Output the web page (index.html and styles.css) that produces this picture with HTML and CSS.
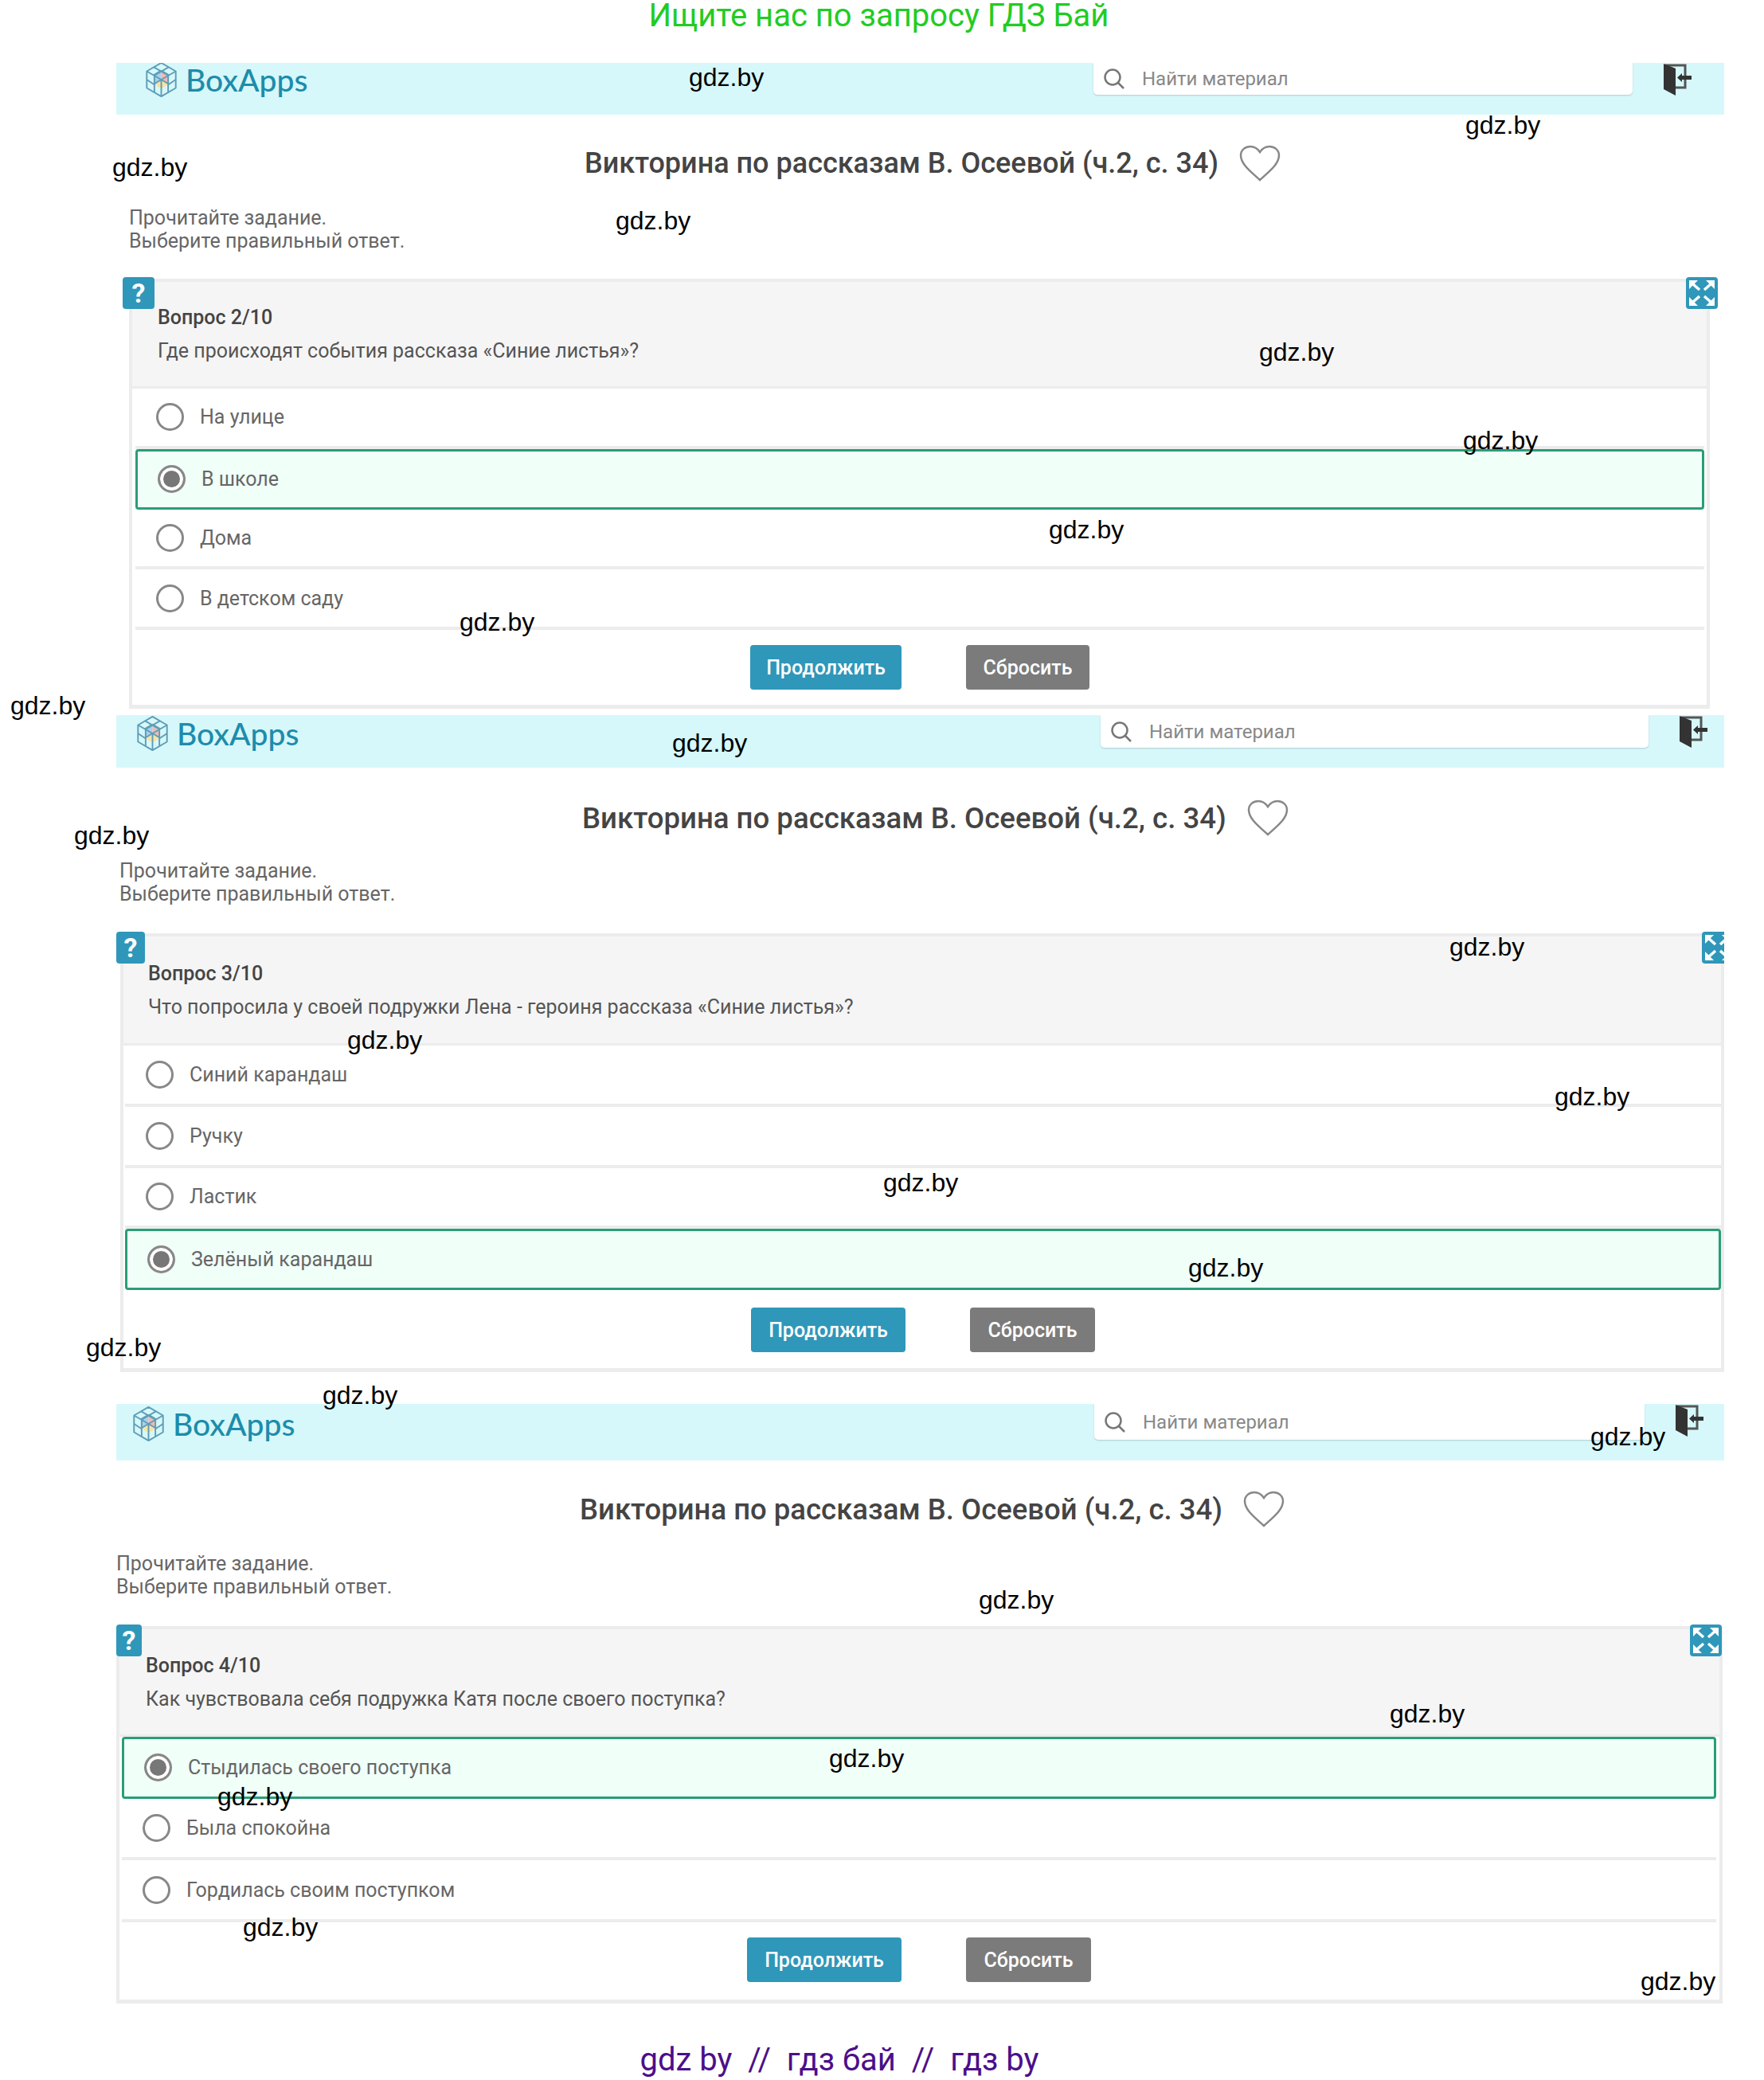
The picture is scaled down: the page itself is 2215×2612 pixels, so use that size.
FILE: index.html

```html
<!DOCTYPE html>
<html lang="ru">
<head>
  <meta charset="UTF-8">
  <title>Викторина по рассказам В. Осеевой</title>
  <link rel="stylesheet" href="styles.css">
</head>
<body>
  <svg class="sprites" width="0" height="0">
    <symbol id="logo-cube" viewBox="0 0 44 48">
      <polygon points="22,12 22,24 12,30 12,18" fill="#a9d0ee"/>
      <polygon points="22,12 32,18 32,30 22,24" fill="#f3b9b4"/>
      <polygon points="22,24 32,30 22,36 12,30" fill="#f7e3a6"/>
      <g fill="none" stroke="#5e9db5" stroke-width="2" stroke-linejoin="round">
        <polygon points="22,2 41,13 41,35 22,46 3,35 3,13"/>
        <path d="M12 7.5 31 18.5V40.500M32 7.500 13 18.500V40.500M3 24 12 30 22 24 32 30 41 24M22 24V46M22 12 12 18M22 12 32 18M3 13 22 24 41 13"/>
      </g>
    </symbol>
    <symbol id="search" viewBox="0 0 28 26">
      <circle cx="12" cy="11" r="9.500" fill="none" stroke="#777" stroke-width="2.500"/>
      <path d="M19 18 26 25" stroke="#777" stroke-width="2.500" fill="none"/>
    </symbol>
    <symbol id="exit" viewBox="0 0 36 40">
      <path d="M2 2H27V30H15" fill="none" stroke="#555" stroke-width="3"/>
      <polygon points="0,0 15,6 15,40 0,32" fill="#333"/>
      <polygon points="17,17.500 23,12 23,15 35,15 35,20 23,20 23,23" fill="#333"/>
    </symbol>
    <symbol id="heart" viewBox="0 0 52 46">
      <path d="M26 44C14 33 2 24 2 13 2 6 8 2 14 2 19 2 23 4.500 26 9 29 4.500 33 2 38 2 44 2 50 6 50 13 50 24 38 33 26 44Z" fill="none" stroke="#888" stroke-width="2.500"/>
    </symbol>
    <symbol id="expand" viewBox="0 0 40 40">
      <g fill="#fff">
        <polygon points="4,4 15,4 4,15"/>
        <polygon points="36,4 25,4 36,15"/>
        <polygon points="4,36 15,36 4,25"/>
        <polygon points="36,36 25,36 36,25"/>
      </g>
      <path d="M8 8 17 16M32 8 23 16M8 32 17 24M32 32 23 24" stroke="#fff" stroke-width="3.500"/>
    </symbol>
  </svg>

  <div class="page">
    <p class="promo">Ищите нас по запросу ГДЗ Бай</p>

    <!-- Question 2 -->
    <section class="quiz quiz-a">
      <header class="topbar">
        <a class="logo" href="#"><svg class="logo-icon"><use href="#logo-cube"/></svg><span class="logo-text">BoxApps</span></a>
        <div class="search"><svg class="search-icon"><use href="#search"/></svg><span>Найти материал</span></div>
        <svg class="exit"><use href="#exit"/></svg>
      </header>
      <div class="title-row">
        <h1>Викторина по рассказам В. Осеевой (ч.2, с. 34)</h1>
        <svg class="heart"><use href="#heart"/></svg>
      </div>
      <p class="hint">Прочитайте задание.<br>Выберите правильный ответ.</p>
      <div class="card">
        <span class="badge badge-help">?</span>
        <span class="badge badge-expand"><svg class="expand-icon"><use href="#expand"/></svg></span>
        <div class="card-head">
          <div class="counter">Вопрос 2/10</div>
          <div class="question">Где происходят события рассказа «Синие листья»?</div>
        </div>
        <div class="options">
          <label class="option"><span class="radio"></span>На улице</label>
          <label class="option selected"><span class="radio"></span>В школе</label>
          <label class="option"><span class="radio"></span>Дома</label>
          <label class="option"><span class="radio"></span>В детском саду</label>
        </div>
        <div class="actions">
          <button class="btn btn-next">Продолжить</button>
          <button class="btn btn-reset">Сбросить</button>
        </div>
      </div>
    </section>

    <!-- Question 3 -->
    <section class="quiz quiz-b">
      <header class="topbar">
        <a class="logo" href="#"><svg class="logo-icon"><use href="#logo-cube"/></svg><span class="logo-text">BoxApps</span></a>
        <div class="search"><svg class="search-icon"><use href="#search"/></svg><span>Найти материал</span></div>
        <svg class="exit"><use href="#exit"/></svg>
      </header>
      <div class="title-row">
        <h1>Викторина по рассказам В. Осеевой (ч.2, с. 34)</h1>
        <svg class="heart"><use href="#heart"/></svg>
      </div>
      <p class="hint">Прочитайте задание.<br>Выберите правильный ответ.</p>
      <div class="card">
        <span class="badge badge-help">?</span>
        <span class="badge badge-expand"><svg class="expand-icon"><use href="#expand"/></svg></span>
        <div class="card-head">
          <div class="counter">Вопрос 3/10</div>
          <div class="question">Что попросила у своей подружки Лена - героиня рассказа «Синие листья»?</div>
        </div>
        <div class="options">
          <label class="option"><span class="radio"></span>Синий карандаш</label>
          <label class="option"><span class="radio"></span>Ручку</label>
          <label class="option"><span class="radio"></span>Ластик</label>
          <label class="option selected"><span class="radio"></span>Зелёный карандаш</label>
        </div>
        <div class="actions">
          <button class="btn btn-next">Продолжить</button>
          <button class="btn btn-reset">Сбросить</button>
        </div>
      </div>
    </section>

    <!-- Question 4 -->
    <section class="quiz quiz-c">
      <header class="topbar">
        <a class="logo" href="#"><svg class="logo-icon"><use href="#logo-cube"/></svg><span class="logo-text">BoxApps</span></a>
        <div class="search"><svg class="search-icon"><use href="#search"/></svg><span>Найти материал</span></div>
        <svg class="exit"><use href="#exit"/></svg>
      </header>
      <div class="title-row">
        <h1>Викторина по рассказам В. Осеевой (ч.2, с. 34)</h1>
        <svg class="heart"><use href="#heart"/></svg>
      </div>
      <p class="hint">Прочитайте задание.<br>Выберите правильный ответ.</p>
      <div class="card">
        <span class="badge badge-help">?</span>
        <span class="badge badge-expand"><svg class="expand-icon"><use href="#expand"/></svg></span>
        <div class="card-head">
          <div class="counter">Вопрос 4/10</div>
          <div class="question">Как чувствовала себя подружка Катя после своего поступка?</div>
        </div>
        <div class="options">
          <label class="option selected"><span class="radio"></span>Стыдилась своего поступка</label>
          <label class="option"><span class="radio"></span>Была спокойна</label>
          <label class="option"><span class="radio"></span>Гордилась своим поступком</label>
        </div>
        <div class="actions">
          <button class="btn btn-next">Продолжить</button>
          <button class="btn btn-reset">Сбросить</button>
        </div>
      </div>
    </section>

    <p class="site-links">gdz by &nbsp;//&nbsp; гдз бай &nbsp;//&nbsp; гдз by</p>

    <!-- Watermarks scattered over the page -->
    <span class="mark m1">gdz.by</span>
    <span class="mark m2">gdz.by</span>
    <span class="mark m3">gdz.by</span>
    <span class="mark m4">gdz.by</span>
    <span class="mark m5">gdz.by</span>
    <span class="mark m6">gdz.by</span>
    <span class="mark m7">gdz.by</span>
    <span class="mark m8">gdz.by</span>
    <span class="mark m9">gdz.by</span>
    <span class="mark m10">gdz.by</span>
    <span class="mark m11">gdz.by</span>
    <span class="mark m12">gdz.by</span>
    <span class="mark m13">gdz.by</span>
    <span class="mark m14">gdz.by</span>
    <span class="mark m15">gdz.by</span>
    <span class="mark m16">gdz.by</span>
    <span class="mark m17">gdz.by</span>
    <span class="mark m18">gdz.by</span>
    <span class="mark m19">gdz.by</span>
    <span class="mark m20">gdz.by</span>
    <span class="mark m21">gdz.by</span>
    <span class="mark m22">gdz.by</span>
    <span class="mark m23">gdz.by</span>
    <span class="mark m24">gdz.by</span>
    <span class="mark m25">gdz.by</span>
  </div>
</body>
</html>
```

FILE: styles.css

```css
/* Reset default margin and padding */
* {
  margin: 0;
  padding: 0;
  box-sizing: border-box;
}

body {
  background: #fff;
  font-family: Roboto, "Noto Sans", sans-serif;
  color: #555;
}

.sprites {
  position: absolute;
}

.page {
  position: relative;
  width: 2215px;
  height: 2612px;
  overflow: hidden;
}

.promo {
  height: 79px;
  padding-top: 0;
  text-align: center;
  color: #22cc22;
  font-size: 40px;
  line-height: 40px;
  padding-right: 8px;
}

/* Each question block is a separate screenshot, so offsets differ a bit */
.quiz {
  margin-left: 146px;
  width: 2019px;
  overflow: hidden;
}

.topbar {
  display: flex;
  align-items: flex-start;
  height: var(--bar-h);
  background: #d6f8fb;
  overflow: hidden;
}

.logo {
  display: flex;
  align-items: center;
  gap: 9px;
  margin-left: var(--logo-left);
  margin-top: var(--logo-top);
  text-decoration: none;
}

.logo-icon {
  width: 43px;
  height: 46px;
}

.logo-text {
  font-family: Lato, Roboto, sans-serif;
  font-size: 39px;
  font-weight: 500;
  line-height: 46px;
  color: #1d8cab;
}

.search {
  display: flex;
  align-items: center;
  gap: 21px;
  margin-left: auto;
  width: var(--search-w);
  height: var(--search-h);
  padding-left: 12px;
  background: #fff;
  border-radius: 0 0 5px 5px;
  box-shadow: 0 1px 2px rgba(0, 0, 0, 0.18);
  font-size: 24px;
  color: #888;
}

.search-icon {
  width: 28px;
  height: 26px;
}

.exit {
  width: 36px;
  height: 40px;
  margin: 1px var(--exit-right) 0 39px;
}

.title-row {
  display: flex;
  align-items: center;
  gap: 26px;
  height: 60px;
  margin-top: var(--title-top);
  margin-left: var(--title-left);
}

h1 {
  font-size: var(--title-size);
  font-weight: 500;
  color: #444;
  white-space: nowrap;
}

.heart {
  width: 52px;
  height: 46px;
}

.hint {
  margin-top: var(--hint-top);
  margin-left: var(--hint-left);
  font-size: 25px;
  line-height: 29px;
  color: #666;
}

.card {
  position: relative;
  width: var(--card-w);
  margin-top: var(--card-top);
  margin-left: var(--card-left);
  border: 4px solid #ececec;
  border-bottom-width: 5px;
}

.badge {
  position: absolute;
  top: -6px;
  display: flex;
  align-items: center;
  justify-content: center;
  height: 40px;
  background: #2f97b9;
  border-radius: 4px;
  color: #fff;
  font-size: 34px;
  font-weight: 700;
}

.badge-help {
  left: var(--help-left);
  width: var(--help-w);
}

.badge-expand {
  right: var(--expand-right);
  width: 40px;
}

.expand-icon {
  width: 40px;
  height: 40px;
}

.card-head {
  height: var(--head-h);
  padding-top: var(--head-pad);
  padding-left: var(--head-left);
  background: #f5f5f5;
  border-bottom: 3px solid #ececec;
}

.counter {
  font-size: 25px;
  font-weight: 500;
  line-height: 34px;
  color: #444;
}

.question {
  margin-top: 8px;
  font-size: 25px;
  line-height: 34px;
  color: #555;
}

.options {
  margin: 0 var(--row-right) 0 var(--row-left);
}

.option {
  display: flex;
  align-items: center;
  gap: 20px;
  height: var(--row-h);
  padding-left: 26px;
  border-bottom: 4px solid #ececec;
  font-size: 25px;
  color: #666;
}

.option.selected {
  padding-left: 25px;
  border: 3px solid #2a9d78;
  border-radius: 4px;
  background: #f0fff8;
}

.radio {
  flex: none;
  width: 35px;
  height: 35px;
  border: 3px solid #888;
  border-radius: 50%;
  background: #fff;
}

.selected .radio {
  background: #777;
  box-shadow: inset 0 0 0 4px #fff;
}

.actions {
  display: flex;
  gap: 81px;
  padding: var(--actions-top) 0 var(--actions-bottom) var(--actions-left);
}

.btn {
  height: 56px;
  border: none;
  border-radius: 4px;
  color: #fff;
  font-family: inherit;
  font-size: 25px;
  font-weight: 500;
}

.btn-next {
  width: var(--next-w);
  background: #2f97b9;
}

.btn-reset {
  width: var(--reset-w);
  background: #7b7b7b;
}

.quiz-a {
  --bar-h: 65px;
  --logo-left: 35px;
  --logo-top: -2px;
  --search-w: 677px;
  --search-h: 40px;
  --exit-right: 40px;
  --title-top: 31px;
  --title-left: 588px;
  --title-size: 36px;
  --hint-top: 24px;
  --hint-left: 16px;
  --card-top: 33px;
  --card-left: 16px;
  --card-w: 1985px;
  --help-left: -12px;
  --help-w: 40px;
  --expand-right: -14px;
  --head-h: 134px;
  --head-pad: 28px;
  --head-left: 32px;
  --row-left: 4px;
  --row-right: 3px;
  --row-h: 75.750px;
  --actions-top: 19px;
  --actions-bottom: 19px;
  --actions-left: 776px;
  --next-w: 190px;
  --reset-w: 155px;
  margin-bottom: 8px;
}

.quiz-b {
  --bar-h: 66px;
  --logo-left: 24px;
  --logo-top: 0;
  --search-w: 688px;
  --search-h: 41px;
  --exit-right: 20px;
  --title-top: 33px;
  --title-left: 585px;
  --title-size: 36.600px;
  --hint-top: 22px;
  --hint-left: 4px;
  --card-top: 35px;
  --card-left: 5px;
  --card-w: 2014px;
  --help-left: -9px;
  --help-w: 36px;
  --expand-right: -16px;
  --head-h: 137px;
  --head-pad: 30px;
  --head-left: 31px;
  --row-left: 2px;
  --row-right: 0px;
  --row-h: 76.750px;
  --actions-top: 22px;
  --actions-bottom: 20px;
  --actions-left: 788px;
  --next-w: 194px;
  --reset-w: 157px;
  margin-bottom: 40px;
}

.quiz-c {
  --bar-h: 71px;
  --logo-left: 19px;
  --logo-top: 2px;
  --search-w: 691px;
  --search-h: 45px;
  --exit-right: 25px;
  --title-top: 31px;
  --title-left: 582px;
  --title-size: 36.500px;
  --hint-top: 24px;
  --hint-left: 0px;
  --card-top: 35px;
  --card-left: 0px;
  --card-w: 2017px;
  --help-left: -4px;
  --help-w: 32px;
  --expand-right: -3px;
  --head-h: 135px;
  --head-pad: 29px;
  --head-left: 33px;
  --row-left: 3px;
  --row-right: 4px;
  --row-h: 77.700px;
  --actions-top: 19px;
  --actions-bottom: 22px;
  --actions-left: 788px;
  --next-w: 194px;
  --reset-w: 157px;
}

.site-links {
  margin-top: 48px;
  text-align: center;
  color: #4b0f8a;
  font-size: 40px;
  line-height: 46px;
  white-space: nowrap;
  padding-right: 107px;
}

/* Watermarks */
.mark {
  position: absolute;
  font-family: "Liberation Sans", Arial, sans-serif;
  font-size: 32px;
  line-height: 36px;
  color: #000;
}

.m1 { left: 865px; top: 79px; }
.m2 { left: 1840px; top: 139px; }
.m3 { left: 141px; top: 192px; }
.m4 { left: 773px; top: 259px; }
.m5 { left: 1581px; top: 424px; }
.m6 { left: 1837px; top: 535px; }
.m7 { left: 1317px; top: 647px; }
.m8 { left: 577px; top: 763px; }
.m9 { left: 13px; top: 868px; }
.m10 { left: 844px; top: 915px; }
.m11 { left: 93px; top: 1031px; }
.m12 { left: 1820px; top: 1171px; }
.m13 { left: 436px; top: 1288px; }
.m14 { left: 1952px; top: 1359px; }
.m15 { left: 1109px; top: 1467px; }
.m16 { left: 1492px; top: 1574px; }
.m17 { left: 108px; top: 1674px; }
.m18 { left: 405px; top: 1734px; }
.m19 { left: 1997px; top: 1786px; }
.m20 { left: 1229px; top: 1991px; }
.m21 { left: 1745px; top: 2134px; }
.m22 { left: 1041px; top: 2190px; }
.m23 { left: 273px; top: 2238px; }
.m24 { left: 305px; top: 2402px; }
.m25 { left: 2060px; top: 2470px; }
```
